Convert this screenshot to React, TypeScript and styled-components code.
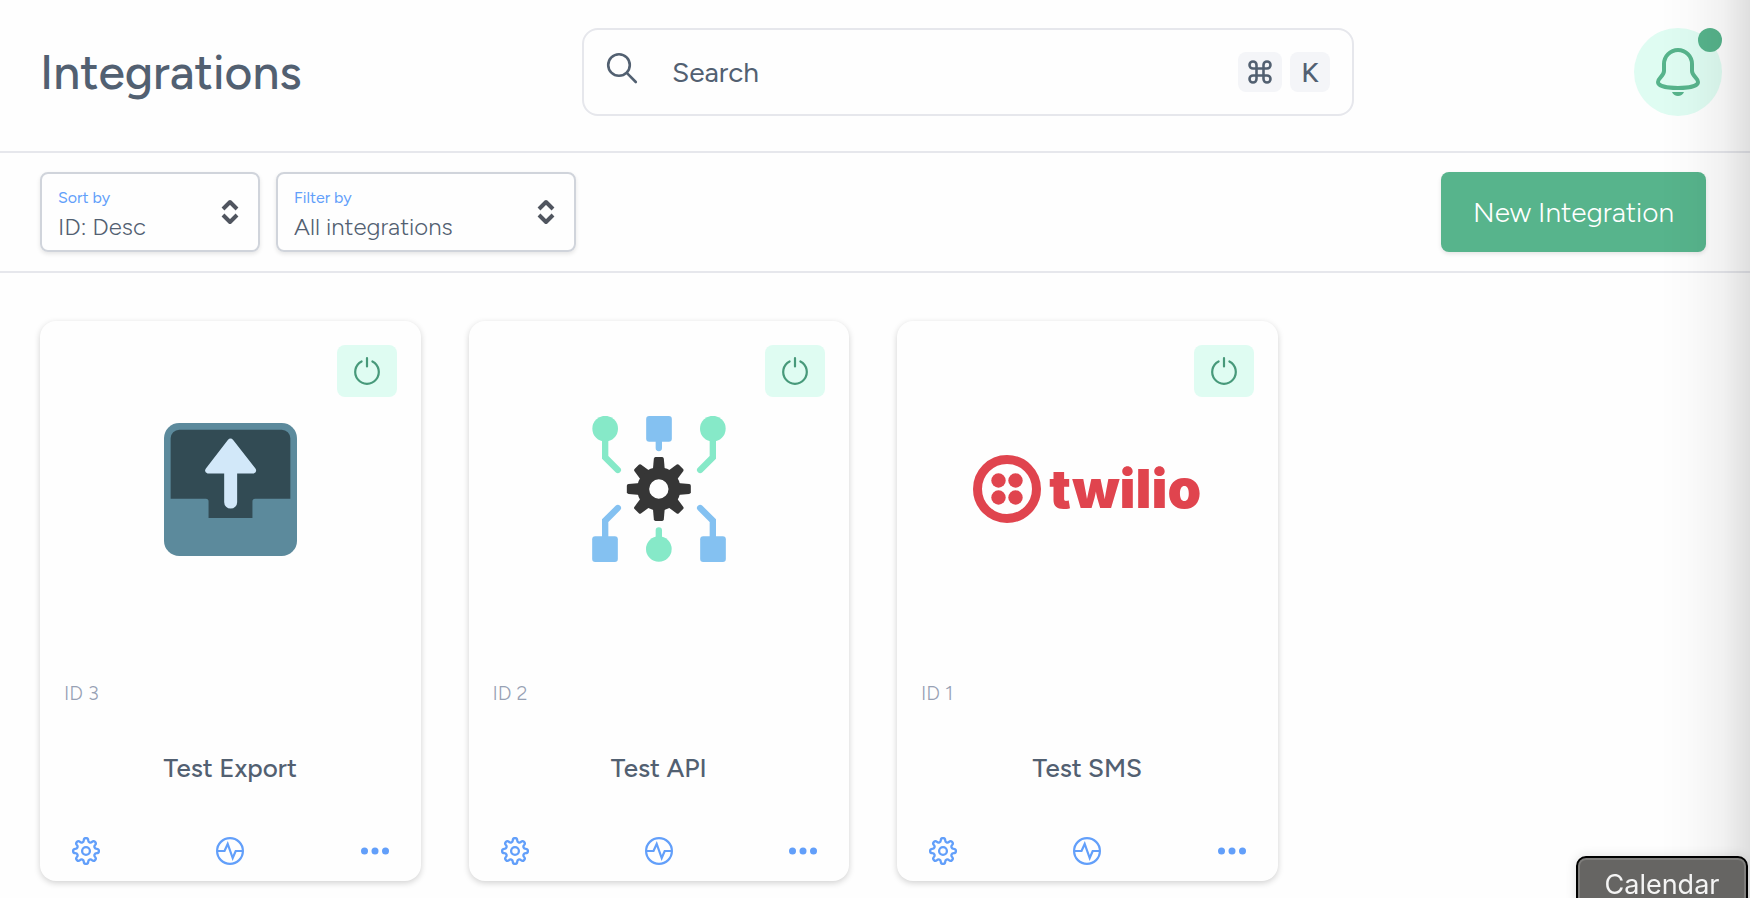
import React from "react";
import styled, { createGlobalStyle } from "styled-components";
import { Command } from "lucide-react";

const color = {
  page: "#fefefe",
  text: "#526071",
  muted: "#97a1b4",
  blue: "#629ffa",
  green: "#57b48c",
  deepGreen: "#47997a",
  mint: "#dffcf2",
  line: "#e6e7ec",
  field: "#d0d4db",
};

const GlobalStyle = createGlobalStyle`
  *, *::before, *::after { box-sizing: border-box; }
  body {
    margin: 0;
    background: ${color.page};
    color: ${color.text};
    font-family: Figtree, Lato, "Open Sans", sans-serif;
    overflow-x: hidden;
  }
  button, input, select { font: inherit; color: inherit; margin: 0; }
  button { border: 0; padding: 0; background: none; cursor: pointer; }
  svg { display: block; }
`;

const Header = styled.header`
  display: grid;
  grid-template-columns: 271fr 386fr 184fr;
  align-items: center;
  padding: 28px 28px 35px 40px;
  border-bottom: 2px solid ${color.line};
`;

const PageTitle = styled.h1`
  margin: 0;
  font-size: 48px;
  line-height: 60px;
  font-weight: 500;
`;

const SearchBox = styled.label`
  display: flex;
  align-items: center;
  gap: 8px;
  height: 88px;
  padding: 0 22px;
  border: 2px solid ${color.line};
  border-radius: 16px;
`;

const SearchGlyph = styled.svg`
  flex: none;
  margin: 0 26px 8px 0;
`;

const SearchInput = styled.input`
  flex: 1;
  min-width: 0;
  padding: 0;
  border: 0;
  outline: 0;
  background: none;
  font-size: 28px;
  line-height: 40px;
  &::placeholder { color: ${color.text}; opacity: 1; }
`;

const Key = styled.kbd<{ $wide?: boolean }>`
  display: grid;
  place-items: center;
  width: ${(p) => (p.$wide ? 44 : 40)}px;
  height: 40px;
  border-radius: 8px;
  background: #f4f5f8;
  font-family: inherit;
  font-size: 28px;
  line-height: 40px;
  font-weight: 500;
`;

const BellButton = styled.button`
  position: relative;
  justify-self: end;
  display: grid;
  place-items: center;
  width: 88px;
  height: 88px;
  border-radius: 50%;
  background: ${color.mint};
`;

const BellDot = styled.span`
  position: absolute;
  top: 0;
  right: 0;
  width: 24px;
  height: 24px;
  border-radius: 50%;
  background: ${color.green};
`;

const Toolbar = styled.div`
  display: flex;
  gap: 16px;
  padding: 19px 44px 19px 40px;
  border-bottom: 2px solid ${color.line};
`;

const Field = styled.label<{ $width: number }>`
  position: relative;
  display: block;
  width: ${(p) => p.$width}px;
  height: 80px;
  padding: 14px 16px;
  border: 2px solid ${color.field};
  border-radius: 8px;
  box-shadow: 0 2px 4px rgba(0, 0, 0, 0.1);
`;

const FieldName = styled.span`
  display: block;
  font-size: 16px;
  line-height: 20px;
  color: ${color.blue};
`;

const FieldSelect = styled.select`
  display: block;
  width: 100%;
  height: 38px;
  padding: 0;
  border: 0;
  outline: 0;
  appearance: none;
  background: none;
  font-size: 24px;
  line-height: 38px;
  font-weight: 300;
`;

const Chevrons = styled.svg`
  position: absolute;
  right: 18px;
  top: 25px;
  pointer-events: none;
`;

const PrimaryButton = styled.button`
  margin-left: auto;
  height: 80px;
  padding: 0 32px;
  border-radius: 8px;
  background: ${color.green};
  color: #fff;
  font-size: 28px;
  line-height: 40px;
  font-weight: 300;
  box-shadow: 0 2px 4px rgba(0, 0, 0, 0.1);
`;

const CardGrid = styled.main`
  display: grid;
  grid-template-columns: repeat(4, minmax(0, 1fr));
  gap: 48px;
  padding: 48px 44px 16px 40px;
`;

const Card = styled.article`
  display: flex;
  flex-direction: column;
  padding: 24px 24px 8px;
  border-radius: 16px;
  background: ${color.page};
  box-shadow: 0 2px 6px rgba(0, 0, 0, 0.18);
`;

const PowerButton = styled.button`
  align-self: flex-end;
  display: grid;
  place-items: center;
  width: 60px;
  height: 52px;
  border-radius: 8px;
  background: ${color.mint};
`;

const LogoArea = styled.div`
  display: grid;
  place-items: center;
  height: 184px;
`;

const CardId = styled.p`
  margin: 96px 0 0;
  font-size: 20px;
  line-height: 32px;
  font-weight: 300;
  color: ${color.muted};
`;

const CardTitle = styled.h2`
  margin: 39px 0 41px;
  text-align: center;
  font-size: 26px;
  line-height: 40px;
  font-weight: 500;
`;

const CardActions = styled.div`
  display: flex;
  justify-content: space-between;
`;

const IconButton = styled.button`
  display: grid;
  place-items: center;
  width: 44px;
  height: 44px;
  color: ${color.blue};
`;

const TwilioMark = styled.div`
  display: flex;
  align-items: center;
  gap: 8px;
  color: #e0444e;
`;

const TwilioWord = styled.span`
  font-family: Inter, sans-serif;
  font-size: 54px;
  line-height: 64px;
  font-weight: 900;
`;

const EdgeShade = styled.div`
  position: fixed;
  inset: 0 0 0 auto;
  width: 90px;
  pointer-events: none;
  background: linear-gradient(
    to right,
    rgba(0, 0, 0, 0) 0%,
    rgba(0, 0, 0, 0.015) 35%,
    rgba(0, 0, 0, 0.05) 70%,
    rgba(0, 0, 0, 0.12) 100%
  );
`;

const DockTooltip = styled.div`
  position: fixed;
  right: 2px;
  bottom: -12px;
  width: 172px;
  height: 54px;
  border: 2px solid #000;
  border-radius: 10px;
  background: #666563;
  box-shadow: inset 0 0 0 2px #7e7d7b, 0 0 12px rgba(0, 0, 0, 0.12);
  color: #f4f4f4;
  font-family: Inter, sans-serif;
  font-size: 27px;
  line-height: 54px;
  text-align: center;
`;

function SearchIcon() {
  return (
    <SearchGlyph width="32" height="32" viewBox="0 0 32 32" fill="none" stroke="currentColor" strokeWidth="2.6" strokeLinecap="round" aria-hidden="true">
      <circle cx="13" cy="13" r="10.800" />
      <path d="M21 21.200 29.800 30" />
    </SearchGlyph>
  );
}

function BellIcon() {
  return (
    <svg width="44" height="48" viewBox="0 0 44 48" aria-hidden="true">
      <path d="M8 23V16a14 14 0 0 1 28 0v7c0 5 6 7 6 11 0 4-9 6-20 6S2 38 2 34c0-4 6-6 6-11Z" fill="none" stroke={color.green} strokeWidth="4" />
      <path d="M16 44h12c-1 2.500-3.500 4-6 4s-5-1.500-6-4Z" fill={color.green} />
    </svg>
  );
}

function ChevronIcon() {
  return (
    <Chevrons width="20" height="26" viewBox="0 0 20 26" fill="none" stroke="#50555f" strokeWidth="4" strokeLinejoin="round" aria-hidden="true">
      <path d="M3 10 10 3l7 7M3 16l7 7 7-7" />
    </Chevrons>
  );
}

function PowerIcon() {
  return (
    <svg width="28" height="28" viewBox="0 0 28 28" fill="none" stroke={color.deepGreen} strokeWidth="2.2" strokeLinecap="round" aria-hidden="true">
      <path d="M8.600 4.500A11.800 11.800 0 1 0 19.400 4.500M14 1.200V9.500" />
    </svg>
  );
}

/* Outline of an eight-toothed cog, centred on the origin. */
const cogPath = (() => {
  const at = (u: number, r: number, turn: number) => {
    const a = (turn * Math.PI) / 4;
    const x = u * Math.cos(a) + r * Math.sin(a);
    const y = u * Math.sin(a) - r * Math.cos(a);
    return `${x.toFixed(2)} ${y.toFixed(2)}`;
  };
  let d = `M${at(-3.56, 8.59, 0)}`;
  for (let i = 0; i < 8; i++) {
    d += `Q${at(-2.2, 9.15, i)} ${at(-2.2, 10.7, i)}`;
    d += `A2.2 2.2 0 0 1 ${at(2.2, 10.7, i)}`;
    d += `Q${at(2.2, 9.15, i)} ${at(3.56, 8.59, i)}`;
  }
  return d + "Z";
})();

function CogIcon() {
  return (
    <svg width="28" height="28" viewBox="-14 -14 28 28" fill="none" stroke="currentColor" strokeWidth="2.3" aria-hidden="true">
      <path d={cogPath} />
      <circle r="3.900" />
    </svg>
  );
}

function PulseIcon() {
  return (
    <svg width="28" height="28" viewBox="0 0 28 28" fill="none" stroke="currentColor" strokeWidth="2.2" aria-hidden="true">
      <circle cx="14" cy="14" r="12.900" />
      <path d="M1 14h7.500l3.200-7 5 14 3-7H27" />
    </svg>
  );
}

function DotsIcon() {
  return (
    <svg width="28" height="28" viewBox="0 0 28 28" fill="currentColor" aria-hidden="true">
      <circle cx="3.500" cy="14" r="3.500" />
      <circle cx="14" cy="14" r="3.500" />
      <circle cx="24.500" cy="14" r="3.500" />
    </svg>
  );
}

function ExportLogo() {
  return (
    <svg width="133" height="133" viewBox="0 0 400 400" role="img" aria-label="Export">
      <rect width="400" height="400" rx="46" fill="#5c8a9c" />
      <path d="M20 46a26 26 0 0 1 26-26H354a26 26 0 0 1 26 26V228H274q-8 0-8 8V286H134V236q0-8-8-8H20Z" fill="#324b54" />
      <path d="M192 51q8-9 16 0l67 86q6 10-5 15H220V238a19.500 19.500 0 0 1-39 0V152H131q-12-5-5-15Z" fill="#d2e8f9" />
    </svg>
  );
}

function ApiLogo() {
  return (
    <svg width="134" height="146" viewBox="0 0 401 438" role="img" aria-label="API">
      <g fill="none" strokeWidth="19" strokeLinecap="round">
        <path d="M39 60V124L77 162M362 60V124L324 162M200 380V343" stroke="#86e9c8" />
        <path d="M39 380V314L77 276M362 380V314L324 276M200 60V96" stroke="#84c1f1" />
      </g>
      <g fill="#86e9c8">
        <circle cx="39" cy="38" r="38.500" />
        <circle cx="362" cy="38" r="38.500" />
        <circle cx="200" cy="399" r="38.500" />
      </g>
      <g fill="#84c1f1">
        <rect x="162" y="0" width="77" height="77" rx="9" />
        <rect x="0" y="361" width="77" height="77" rx="9" />
        <rect x="324" y="361" width="77" height="77" rx="9" />
      </g>
      <g transform="translate(200 219)" fill="#363636">
        {[0, 45, 90, 135, 180, 225, 270, 315].map((turn) => (
          <path
            key={turn}
            transform={`rotate(${turn})`}
            d={turn % 90 ? "M-19-56-14-90q1-4 5-4H9q4 0 5 4L19-56Z" : "M-18-56-15-91q1-5 5-5H10q4 0 5 5L18-56Z"}
          />
        ))}
        <circle r="47" fill="none" stroke="#363636" strokeWidth="36" />
      </g>
    </svg>
  );
}

function TwilioLogo() {
  return (
    <TwilioMark>
      <svg width="68" height="68" viewBox="0 0 68 68" fill="currentColor" aria-hidden="true">
        <circle cx="34" cy="34" r="29.500" fill="none" stroke="currentColor" strokeWidth="9" />
        <circle cx="25.500" cy="25.500" r="7.200" />
        <circle cx="42.500" cy="25.500" r="7.200" />
        <circle cx="25.500" cy="42.500" r="7.200" />
        <circle cx="42.500" cy="42.500" r="7.200" />
      </svg>
      <TwilioWord>twilio</TwilioWord>
    </TwilioMark>
  );
}

const integrations = [
  { id: 3, name: "Test Export", Logo: ExportLogo },
  { id: 2, name: "Test API", Logo: ApiLogo },
  { id: 1, name: "Test SMS", Logo: TwilioLogo },
];

export default function App() {
  return (
    <>
      <GlobalStyle />
      <Header>
        <PageTitle>Integrations</PageTitle>
        <SearchBox>
          <SearchIcon />
          <SearchInput type="text" placeholder="Search" aria-label="Search" />
          <Key $wide aria-label="Command">
            <Command size={28} strokeWidth={2.2} />
          </Key>
          <Key>K</Key>
        </SearchBox>
        <BellButton type="button" aria-label="Notifications">
          <BellIcon />
          <BellDot />
        </BellButton>
      </Header>
      <Toolbar>
        <Field $width={220}>
          <FieldName>Sort by</FieldName>
          <FieldSelect defaultValue="desc">
            <option value="desc">ID: Desc</option>
            <option value="asc">ID: Asc</option>
          </FieldSelect>
          <ChevronIcon />
        </Field>
        <Field $width={300}>
          <FieldName>Filter by</FieldName>
          <FieldSelect defaultValue="all">
            <option value="all">All integrations</option>
          </FieldSelect>
          <ChevronIcon />
        </Field>
        <PrimaryButton type="button">New Integration</PrimaryButton>
      </Toolbar>
      <CardGrid>
        {integrations.map(({ id, name, Logo }) => (
          <Card key={id}>
            <PowerButton type="button" aria-label={`Toggle ${name}`}>
              <PowerIcon />
            </PowerButton>
            <LogoArea>
              <Logo />
            </LogoArea>
            <CardId>ID {id}</CardId>
            <CardTitle>{name}</CardTitle>
            <CardActions>
              <IconButton type="button" aria-label="Settings">
                <CogIcon />
              </IconButton>
              <IconButton type="button" aria-label="Activity">
                <PulseIcon />
              </IconButton>
              <IconButton type="button" aria-label="More">
                <DotsIcon />
              </IconButton>
            </CardActions>
          </Card>
        ))}
      </CardGrid>
      <EdgeShade />
      <DockTooltip role="tooltip">Calendar</DockTooltip>
    </>
  );
}
